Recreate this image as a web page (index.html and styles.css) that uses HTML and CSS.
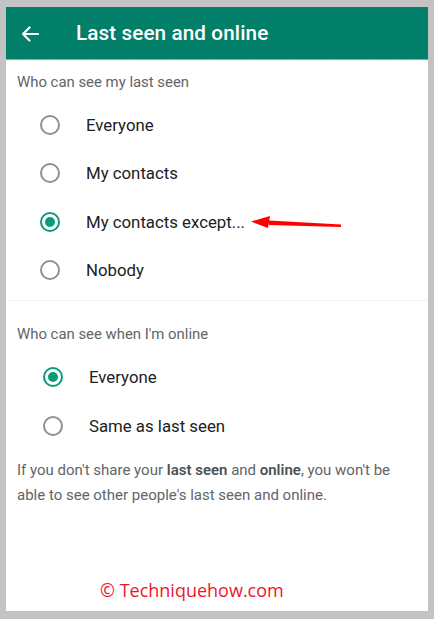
FILE: index.html
```html
<!DOCTYPE html>
<html>
<head>
<meta charset="utf-8">
<link rel="stylesheet" href="styles.css">
</head>
<body>
<div class="frame">
  <header class="appbar">
    <svg class="back" width="18" height="16" viewBox="0 0 18 16"><path d="M17 8H2M8.5 1.5L2 8l6.5 6.5" fill="none" stroke="#fff" stroke-width="2.2" stroke-linecap="round" stroke-linejoin="round"/></svg>
    <h1 class="title">Last seen and online</h1>
  </header>
  <section class="group first">
    <div class="group-title">Who can see my last seen</div>
    <div class="option"><span class="radio"></span><span class="label">Everyone</span></div>
    <div class="option"><span class="radio"></span><span class="label">My contacts</span></div>
    <div class="option"><span class="radio on"></span><span class="label">My contacts except...</span>
      <svg class="pointer" width="92" height="14" viewBox="0 0 92 14"><path d="M18 4.5L90 8.5L90 11L18 9Z" fill="#f00"/><path d="M0 5.5L19 0L17 12Z" fill="#f00"/></svg>
    </div>
    <div class="option"><span class="radio"></span><span class="label">Nobody</span></div>
  </section>
  <section class="group second">
    <div class="group-title">Who can see when I'm online</div>
    <div class="option wide"><span class="radio on"></span><span class="label">Everyone</span></div>
    <div class="option wide"><span class="radio"></span><span class="label">Same as last seen</span></div>
    <p class="note">If you don't share your <b>last seen</b> and <b>online</b>, you won't be able to see other people's last seen and online.</p>
  </section>
  <div class="mark">© Techniquehow.com</div>
</div>
</body>
</html>
```
FILE: styles.css
```css
html, body {
  margin: 0;
  padding: 0;
  background: #c3c3c3;
}
.frame {
  margin: 7px 6px 0 6px;
  width: 422px;
  height: 604px;
  background: #fff;
  display: flex;
  flex-direction: column;
  font-family: Roboto, "Noto Sans", sans-serif;
  overflow: hidden;
}
.appbar {
  height: 52px;
  background: #017f68;
  border-bottom: 1px solid #6fbcaa;
  display: flex;
  align-items: center;
  padding-left: 15px;
  box-sizing: content-box;
}
.back { display: block; margin-top: 1px; }
.title {
  margin: 0 0 0 37px;
  color: #fff;
  font-size: 20.7px;
  font-weight: 500;
  letter-spacing: 0.1px;
}
.group {
  border-top: 1px dashed #f0f0f0;
}
.group.first {
  padding: 9px 0 6px 0;
  border-bottom: 1px solid #f2f2f2;
}
.group.second { border-top: none; padding-top: 21px; }
.group-title {
  padding-left: 11px;
  font-size: 14.9px;
  color: #5f6569;
  height: 24px;
  line-height: 24px;
  margin-bottom: 7px;
}
.option {
  display: flex;
  align-items: center;
  height: 48.3px;
  padding-left: 34px;
  position: relative;
}
.option.wide { padding-left: 37px; }
.radio {
  width: 16px;
  height: 16px;
  border: 2px solid #8b9196;
  border-radius: 50%;
  box-sizing: content-box;
  position: relative;
  flex: none;
}
.radio.on { border-color: #0a9b7c; }
.radio.on::after {
  content: "";
  position: absolute;
  left: 3px; top: 3px;
  width: 10px; height: 10px;
  border-radius: 50%;
  background: #0a9b7c;
}
.label {
  margin-left: 26px;
  font-size: 16.8px;
  color: #202124;
}
.pointer { margin-left: 6px; margin-top: 2px; }
.note {
  margin: 8px 0 0 11px;
  padding-right: 30px;
  font-size: 15px;
  line-height: 25px;
  color: #5f6569;
}
.note b { font-weight: 600; color: #4b5154; }
.mark {
  margin-top: auto;
  margin-bottom: 9px;
  padding-left: 94px;
  font-family: "Open Sans", "DejaVu Sans", sans-serif;
  font-size: 18px;
  color: #f0142d;
}
```
